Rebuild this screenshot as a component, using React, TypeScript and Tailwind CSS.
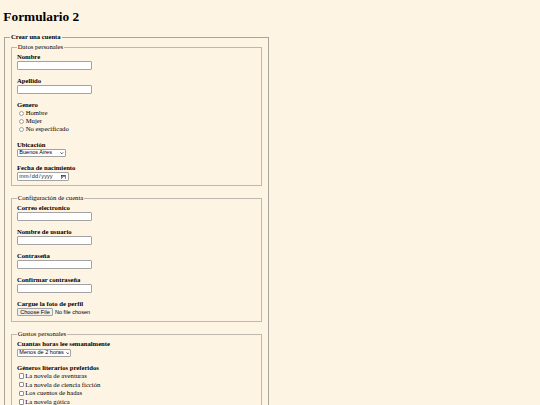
import React from "react";

const labelCls = "block font-bold leading-[7.67px]";
const inputCls =
  "block h-[8.7px] w-[74.6px] rounded-[1px] border border-[#a3a3a3] bg-white";
const gap = "h-[7.67px]";
const fsGap = "h-[8.5px]";
const fsCls =
  "mx-[0.83px] min-w-0 border border-[#bdb9b0] px-[5px] pt-[2.33px] pb-[4.17px]";
const legendCls = "px-[0.83px] leading-[7.67px]";
const sans = "font-['Liberation_Sans',Arial,sans-serif]";

function TextField({ label, type = "text" }: { label: string; type?: string }) {
  return (
    <div>
      <label className={labelCls}>{label}</label>
      <input type={type} className={inputCls} />
    </div>
  );
}

function Chevron() {
  return (
    <svg
      className="pointer-events-none absolute right-[2.2px] top-[2.9px]"
      width="3.6"
      height="2.2"
      viewBox="0 0 8 5"
    >
      <path d="M1 1l3 3 3-3" stroke="#111" strokeWidth="1.8" fill="none" />
    </svg>
  );
}

function Select({ width, options }: { width: string; options: string[] }) {
  return (
    <div className="h-[8.7px] pt-[0.5px]">
      <div className={`relative h-[7.9px] ${width}`}>
        <select
          className={`block h-full w-full appearance-none rounded-[1px] border border-[#a3a3a3] bg-white pl-[1.3px] ${sans} text-[5.55px] leading-none text-black`}
        >
          {options.map((o) => (
            <option key={o}>{o}</option>
          ))}
        </select>
        <Chevron />
      </div>
    </div>
  );
}

export default function App() {
  return (
    <div className="h-[405px] overflow-hidden bg-[#fdf4e3] px-[3.33px] pt-[8.93px] font-['Liberation_Serif','Times_New_Roman',serif] text-[6.67px] text-black">
      <h1 className="mb-[8.93px] text-[13.33px] font-bold leading-[15.33px]">
        Formulario 2
      </h1>
      <form>
        <fieldset className="ml-[0.83px] w-[264.5px] min-w-0 border border-[#a8a49c] px-[5px] pt-[2.33px] pb-[4.17px]">
          <legend className={`${legendCls} font-bold`}>Crear una cuenta</legend>

          <fieldset className={fsCls}>
            <legend className={legendCls}>Datos personales</legend>
            <TextField label="Nombre" />
            <div className={gap} />
            <TextField label="Apellido" />
            <div className={gap} />
            <div>
              <span className={labelCls}>Genero</span>
              {["Hombre", "Mujer", "No especificado"].map((g) => (
                <label key={g} className="flex h-[8.1px] items-center leading-[7.67px]">
                  <input
                    type="radio"
                    name="genero"
                    className="ml-[2.08px] mr-[1.25px] mt-[0.6px] h-[5.4px] w-[5.4px] appearance-none rounded-full border border-[#a3a3a3] bg-white"
                  />
                  {g}
                </label>
              ))}
            </div>
            <div className={gap} />
            <div>
              <label className={labelCls}>Ubicación</label>
              <Select
                width="w-[49px]"
                options={["Buenos Aires", "Córdoba", "Rosario", "Mendoza"]}
              />
            </div>
            <div className="h-[7.2px]" />
            <div>
              <label className={labelCls}>Fecha de nacimiento</label>
              <div className="relative flex h-[8.7px] w-[52px] items-center rounded-[1px] border border-[#a3a3a3] bg-white pl-[1.3px]">
                <span className={`flex items-center ${sans} text-[5.55px] leading-none text-[#222]`}>
                  <span>mm</span>
                  <span className="mx-[0.9px]">/</span>
                  <span>dd</span>
                  <span className="mx-[0.9px]">/</span>
                  <span>yyyy</span>
                </span>
                <svg
                  className="absolute right-[2.3px] top-[1.6px]"
                  width="4.6"
                  height="4.6"
                  viewBox="0 0 10 10"
                >
                  <rect x="0.8" y="1.3" width="8.4" height="7.9" fill="none" stroke="#111" strokeWidth="1.1" />
                  <rect x="0.8" y="1.3" width="8.4" height="1.9" fill="#111" />
                  <rect x="2.6" y="4.6" width="1.6" height="1.4" fill="#111" />
                </svg>
              </div>
            </div>
          </fieldset>

          <div className={fsGap} />

          <fieldset className={fsCls}>
            <legend className={legendCls}>Configuración de cuenta</legend>
            <TextField label="Correo electronico" type="email" />
            <div className={gap} />
            <TextField label="Nombre de usuario" />
            <div className={gap} />
            <TextField label="Contraseña" type="password" />
            <div className={gap} />
            <TextField label="Confirmar contraseña" type="password" />
            <div className={gap} />
            <div>
              <label className={labelCls}>Cargue la foto de perfil</label>
              <div className="flex h-[8.7px] items-center">
                <span
                  className={`flex h-[8px] w-[36px] items-center justify-center rounded-[1px] border border-[#a3a3a3] bg-[#efefef] ${sans} text-[5.55px] leading-none text-black`}
                >
                  Choose File
                </span>
                <span className={`ml-[2px] ${sans} text-[5.55px] leading-none text-black`}>
                  No file chosen
                </span>
              </div>
            </div>
          </fieldset>

          <div className={fsGap} />

          <fieldset className={fsCls}>
            <legend className={legendCls}>Gustos personales</legend>
            <div>
              <label className={labelCls}>Cuantas horas lee semanalmente</label>
              <Select
                width="w-[54.5px]"
                options={["Menos de 2 horas", "Entre 2 y 5 horas", "Más de 5 horas"]}
              />
            </div>
            <div className="h-[7.2px]" />
            <div>
              <span className={labelCls}>Géneros literarios preferidos</span>
              {[
                "La novela de aventuras",
                "La novela de ciencia ficción",
                "Los cuentos de hadas",
                "La novela gótica",
              ].map((g) => (
                <label key={g} className="flex h-[8.67px] items-center leading-[7.67px]">
                  <input
                    type="checkbox"
                    className="ml-[1.67px] mr-[1.25px] h-[5.4px] w-[5.4px] appearance-none rounded-[1px] border border-[#8f8f8f] bg-white"
                  />
                  {g}
                </label>
              ))}
            </div>
          </fieldset>
        </fieldset>
      </form>
    </div>
  );
}
